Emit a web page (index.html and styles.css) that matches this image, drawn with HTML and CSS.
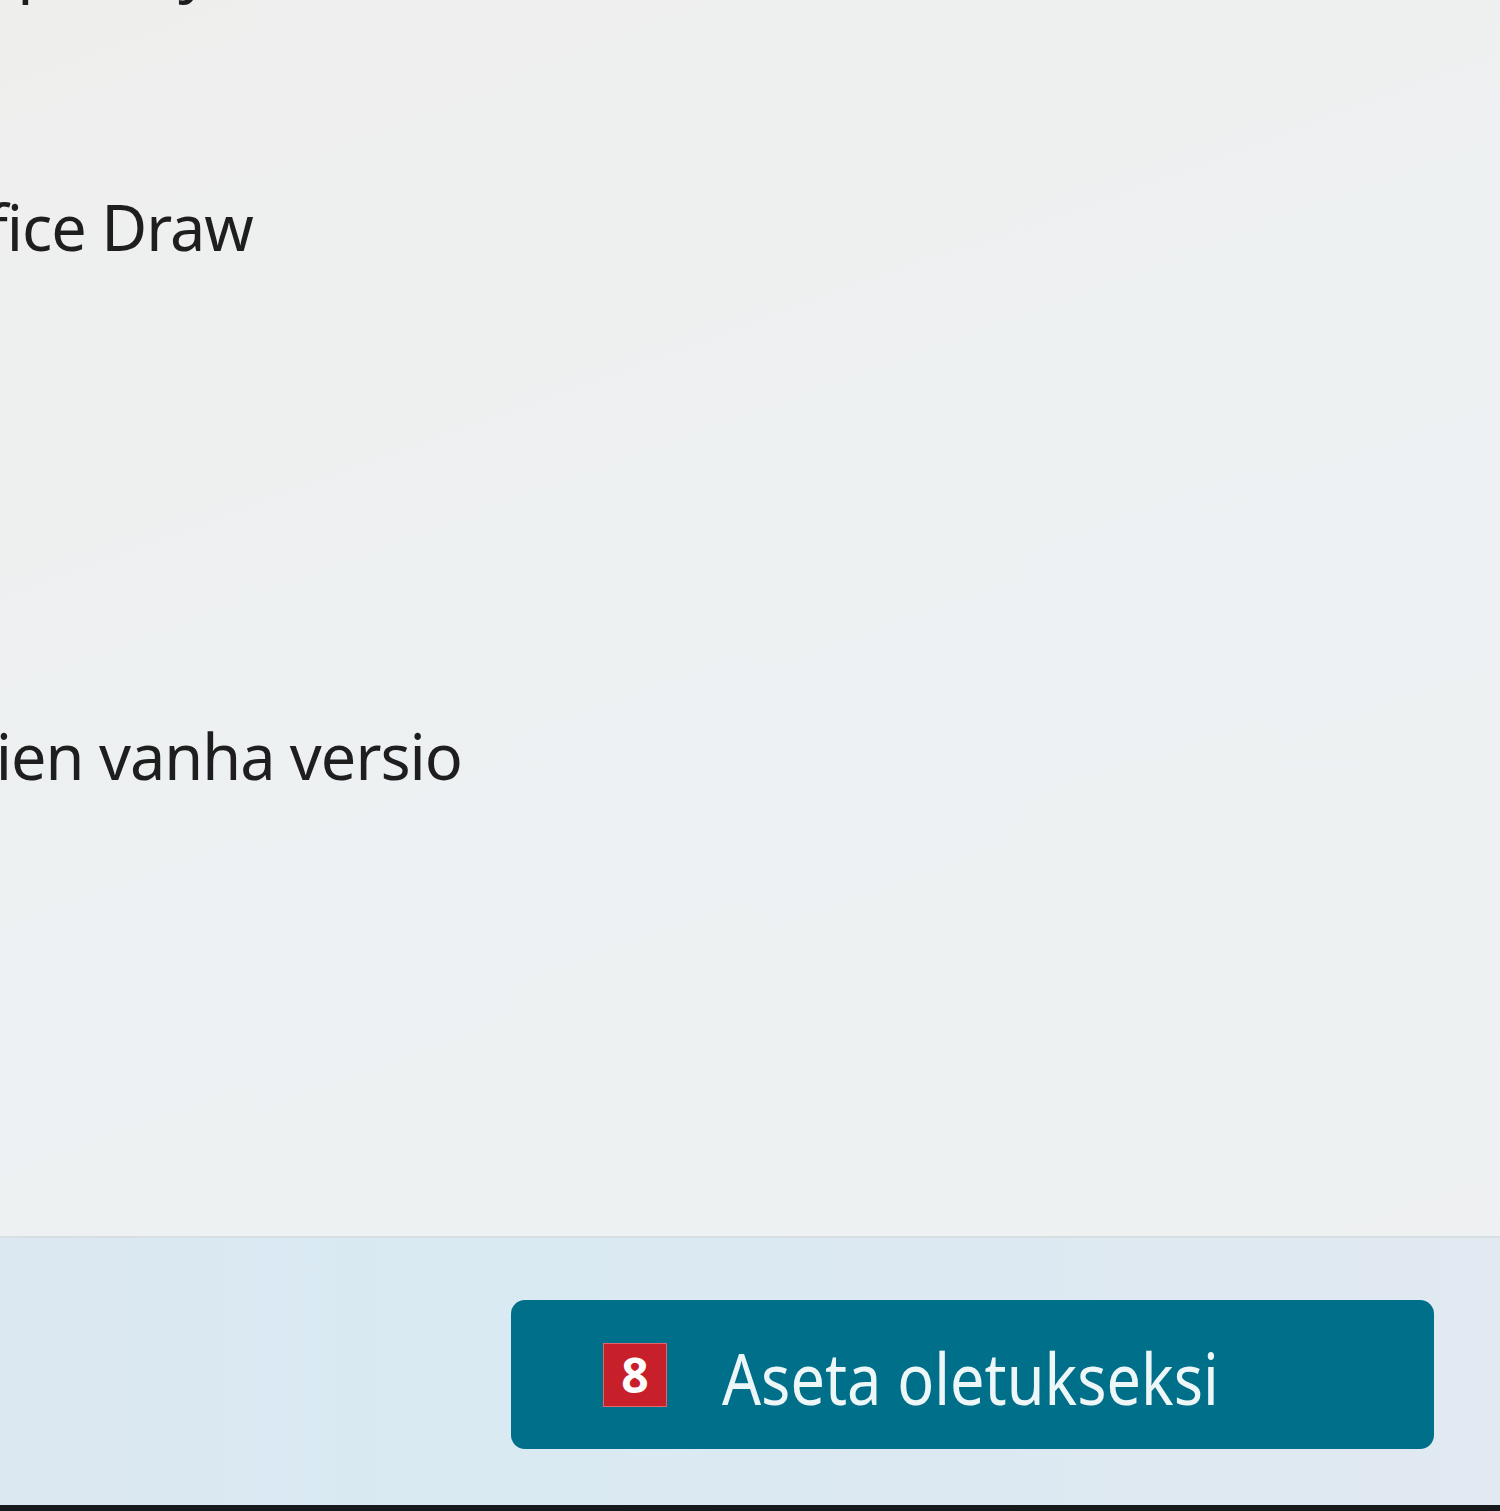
FILE: index.html
```html
<!DOCTYPE html>
<html lang="fi">
<head>
    <meta charset="UTF-8">
    <meta name="viewport" content="width=device-width, initial-scale=1.0">
    <link rel="stylesheet" href="styles.css">
    <title>Oletussovellukset</title>
</head>
<body>
    <div class="window">
        <div class="app-list">
            <!-- luettelo on rajattu vasemmalta, kuten kuvakaappauksessa -->
            <div class="app-item app-item-first">
                <span class="app-name app-name-snip">Kuvakaappaustyökalu</span>
            </div>
            <div class="app-item app-item-second">
                <span class="app-name app-name-draw">LibreOffice Draw</span>
            </div>
            <div class="app-item app-item-third">
                <span class="app-name app-name-photos">Valokuvien vanha versio</span>
            </div>
        </div>
        <div class="footer">
            <button class="default-button" type="button">
                <span class="key-badge">8</span>
                <span class="button-label">Aseta oletukseksi</span>
            </button>
        </div>
    </div>
</body>
</html>
```
FILE: styles.css
```css
html, body {
    margin: 0;
    padding: 0;
}
body {
    width: 1500px;
    height: 1511px;
    overflow: hidden;
    font-family: "Noto Sans", "Open Sans", sans-serif;
    background-color: #eef0ef;
}
.window {
    display: flex;
    flex-direction: column;
    height: 1511px;
    background: linear-gradient(160deg, #eeefed 0%, #eef0f0 25%, #edf1f3 50%, #eef1f2 75%, #eff1f1 100%);
}
.app-list {
    flex: 1;
    overflow: hidden;
    color: #1e1e1e;
}
.app-item {
    height: 80px;
    white-space: nowrap;
}
.app-item-first {
    margin-top: -74px;
}
.app-item-second {
    margin-top: 181px;
}
.app-item-third {
    margin-top: 449px;
}
.app-name {
    display: inline-block;
    font-size: 63px;
    letter-spacing: -1px;
    line-height: 80px;
    font-variant-ligatures: none;
}
.app-name-snip {
    margin-left: -263px;
}
.app-name-draw {
    margin-left: -226px;
}
.app-name-photos {
    margin-left: -228px;
}
.footer {
    flex-shrink: 0;
    height: 275px;
    box-sizing: border-box;
    border-top: 2px solid #d8dfe3;
    border-bottom: 6px solid #161a1c;
    display: flex;
    justify-content: flex-end;
    align-items: flex-start;
    padding: 62px 66px 0 0;
    background: linear-gradient(90deg, #dbe7f1 0%, #d9eaf3 30%, #dbe9f2 50%, #e1e9f1 100%);
}
.default-button {
    width: 923px;
    height: 149px;
    border: none;
    border-radius: 14px;
    background-color: #006f8a;
    display: flex;
    align-items: center;
    padding: 0 0 0 92px;
    box-sizing: border-box;
    gap: 55px;
    font-family: inherit;
    cursor: pointer;
}
.key-badge {
    width: 64px;
    height: 64px;
    box-sizing: border-box;
    border: 1px solid #e0666b;
    background-color: #c8202a;
    color: #fff;
    font-weight: bold;
    font-size: 48px;
    line-height: 62px;
    text-align: center;
    flex-shrink: 0;
}
.button-label {
    font-size: 72px;
    line-height: 90px;
    color: #eef7f8;
    white-space: nowrap;
    display: inline-block;
    margin-top: 4px;
    transform: scaleX(0.85);
    transform-origin: left center;
}
```
